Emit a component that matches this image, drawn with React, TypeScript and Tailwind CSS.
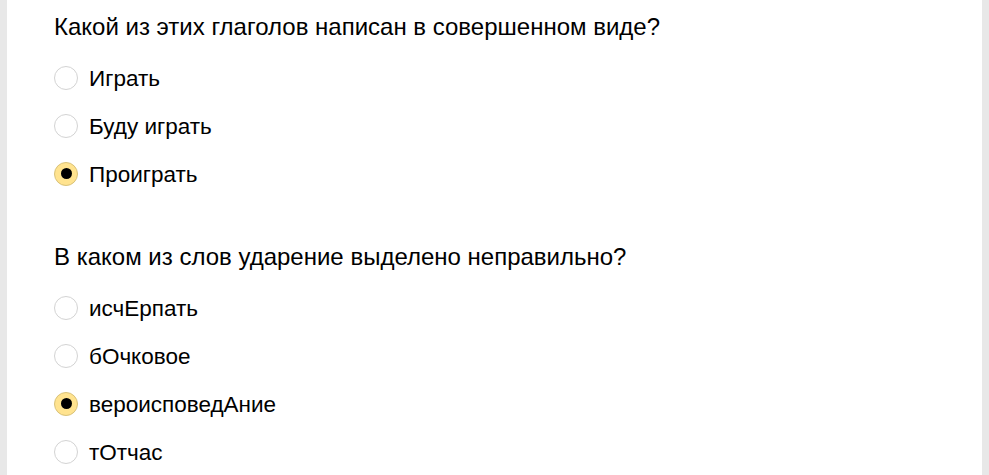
import React from "react";

type Question = { title: string; options: string[]; selected: number };

const questions: Question[] = [
  {
    title: "Какой из этих глаголов написан в совершенном виде?",
    options: ["Играть", "Буду играть", "Проиграть"],
    selected: 2,
  },
  {
    title: "В каком из слов ударение выделено неправильно?",
    options: ["исчЕрпать", "бОчковое", "вероисповедАние", "тОтчас"],
    selected: 2,
  },
];

const Radio = ({ checked }: { checked: boolean }) => {
  if (checked) {
    return (
      <span className="flex items-center justify-center w-[24px] h-[24px] rounded-full bg-[#ffe38f] border border-[#d9c27a] -mt-[3px] shrink-0">
        <span className="w-[11px] h-[11px] rounded-full bg-black" />
      </span>
    );
  }
  return (
    <span className="w-[24px] h-[24px] rounded-full bg-white border border-[#d3d3d3] -mt-[3px] shrink-0" />
  );
};

const QuestionBlock = ({ q }: { q: Question }) => {
  return (
    <div className="mb-[46px]">
      <div className="h-[24px] leading-[24px] text-[24px] mb-[16px] whitespace-nowrap">{q.title}</div>
      {q.options.map((opt, index) => (
        <div key={index} className="flex items-center h-[48px]">
          <Radio checked={index === q.selected} />
          <span className="ml-[11px] text-[22.5px] leading-[24px] whitespace-nowrap">{opt}</span>
        </div>
      ))}
    </div>
  );
};

export default function App() {
  return (
    <div
      className="flex w-[989px] h-[475px] overflow-hidden text-black"
      style={{ fontFamily: '"Liberation Sans", Arial, sans-serif' }}
    >
      <div className="w-[7px] bg-[#e8e8e8]" />
      <div className="flex-1 bg-white pl-[47px] pt-[15px]">
        {questions.map((q, i) => (
          <QuestionBlock key={i} q={q} />
        ))}
      </div>
      <div className="w-[7px] bg-[#e8e8e8]" />
    </div>
  );
}
